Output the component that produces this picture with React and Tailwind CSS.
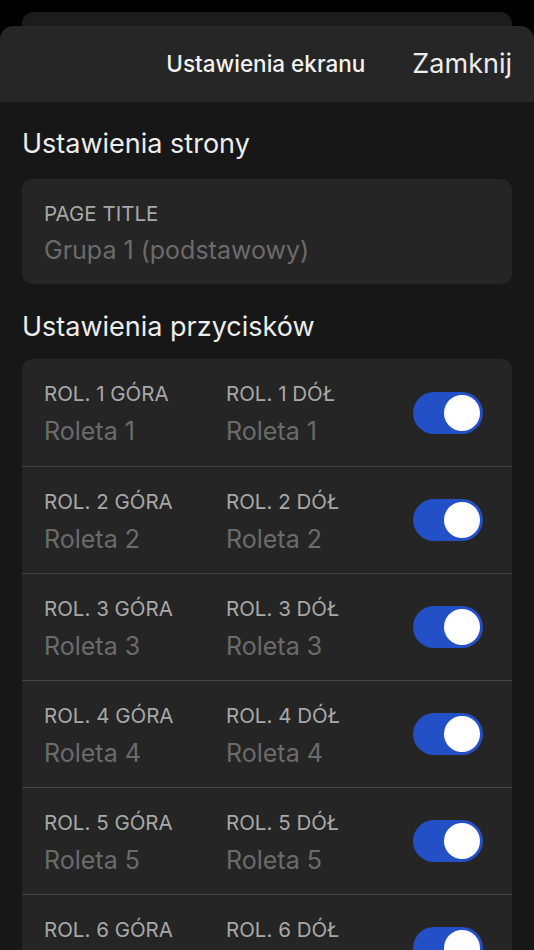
import React from 'react';

const rows = [1, 2, 3, 4, 5, 6];

function Toggle() {
  return (
    <div className="w-[70px] h-[42px] rounded-full bg-[#2350c6] flex items-center justify-end px-[3px] shrink-0">
      <div className="w-[36px] h-[36px] rounded-full bg-white" />
    </div>
  );
}

export default function App() {
  return (
    <div className="h-[950px] w-[534px] overflow-hidden bg-black flex flex-col" style={{ fontFamily: 'Inter, "Noto Sans", sans-serif' }}>
      {/* card behind sheet */}
      <div className="h-[26px] pt-[12px] px-[22px] shrink-0">
        <div className="h-full bg-[#1c1c1c] rounded-t-[12px]" />
      </div>

      <div className="flex-1 bg-[#171717] rounded-t-[14px] overflow-hidden flex flex-col">
        {/* header */}
        <div className="h-[76px] bg-[#262626] flex items-center justify-end pr-[22px] shrink-0">
          <span className="text-[22.5px] font-medium text-[#f2f2f2] mr-[47px]">Ustawienia ekranu</span>
          <span className="text-[27px] text-[#ececec]">Zamknij</span>
        </div>

        <div className="px-[22px] pt-[24px] flex flex-col">
          <h2 className="text-[27px] text-[#ededed] leading-[36px]">Ustawienia strony</h2>
          <div className="mt-[17px] bg-[#252525] rounded-[10px] h-[105px] px-[22px] pt-[22px]">
            <div className="text-[20.5px] text-[#a8a8a8] leading-[26px]">PAGE TITLE</div>
            <div className="text-[25px] text-[#6b6b6b] leading-[32px] mt-[7px]">Grupa 1 (podstawowy)</div>
          </div>

          <h2 className="mt-[25px] text-[27px] text-[#ededed] leading-[36px]">Ustawienia przycisków</h2>
          <div className="mt-[14px] bg-[#252525] rounded-[10px] overflow-hidden">
            {rows.map((n, i) => (
              <div key={n} className={`h-[107px] flex items-center pl-[22px] pr-[29px] ${i > 0 ? 'border-t border-[#454545]' : ''}`}>
                <div className="w-[182px] pt-[3px]">
                  <div className="text-[20.5px] text-[#a8a8a8] leading-[26px]">ROL. {n} GÓRA</div>
                  <div className="text-[25px] text-[#6b6b6b] leading-[32px] mt-[8px]">Roleta {n}</div>
                </div>
                <div className="flex-1 pt-[3px]">
                  <div className="text-[20.5px] text-[#a8a8a8] leading-[26px]">ROL. {n} DÓŁ</div>
                  <div className="text-[25px] text-[#6b6b6b] leading-[32px] mt-[8px]">Roleta {n}</div>
                </div>
                <Toggle />
              </div>
            ))}
          </div>
        </div>
      </div>
    </div>
  );
}
